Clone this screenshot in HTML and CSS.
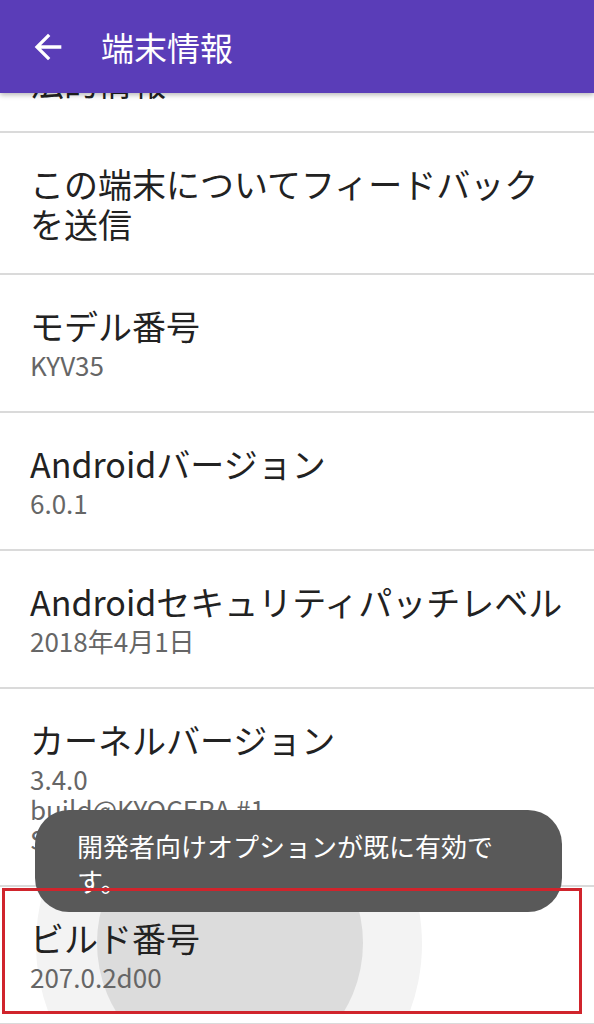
FILE: index.html
```html
<!DOCTYPE html>
<html lang="ja">
<head>
<meta charset="utf-8">
<title>端末情報</title>
<link rel="stylesheet" href="styles.css">
</head>
<body>
<div class="screen">
  <header class="appbar">
    <svg class="back" viewBox="0 0 24 24" aria-hidden="true"><path d="M20 11H7.83l5.59-5.59L12 4l-8 8 8 8 1.41-1.41L7.83 13H20v-2z"/></svg>
    <h1 class="appbar-title">端末情報</h1>
  </header>
  <div class="viewport">
    <ul class="list">
      <li class="pref"><div class="pref-title">法的情報</div></li>
      <li class="pref"><div class="pref-title">この端末についてフィードバックを送信</div></li>
      <li class="pref"><div class="pref-title">モデル番号</div><div class="pref-summary">KYV35</div></li>
      <li class="pref"><div class="pref-title">Androidバージョン</div><div class="pref-summary">6.0.1</div></li>
      <li class="pref"><div class="pref-title">Androidセキュリティパッチレベル</div><div class="pref-summary">2018年4月1日</div></li>
      <li class="pref"><div class="pref-title">カーネルバージョン</div><div class="pref-summary">3.4.0<br>build@KYOCERA #1<br>Sun Mar 18 00:00:00 JST 2018</div></li>
      <li class="pref pressed">
        <div class="ripple-clip"><span class="ripple-outer"></span><span class="ripple-inner"></span></div>
        <div class="pref-title">ビルド番号</div><div class="pref-summary">207.0.2d00</div>
      </li>
    </ul>
  </div>
  <div class="toast">開発者向けオプションが既に有効です。</div>
  <div class="highlight"></div>
</div>
</body>
</html>
```
FILE: styles.css
```css
* { box-sizing: border-box; }
html, body { margin: 0; padding: 0; background: #fff; }
body { font-family: "Noto Sans CJK JP", Roboto, sans-serif; }

.screen {
  position: relative;
  width: 594px;
  height: 1024px;
  overflow: hidden;
  display: flex;
  flex-direction: column;
  background: #fff;
}

.appbar {
  position: relative;
  z-index: 2;
  height: 93px;
  flex: none;
  background: #5a3db8;
  display: flex;
  align-items: center;
  padding-left: 28px;
  gap: 33px;
  box-shadow: 0 2px 5px rgba(0,0,0,0.28);
}
.back { width: 40px; height: 40px; fill: #fff; flex: none; }
.appbar-title {
  margin: 0;
  color: #fff;
  font-size: 33px;
  font-weight: 400;
  line-height: 40px;
}

.viewport { flex: 1; overflow: hidden; }
.list { list-style: none; margin: -62px 0 0; padding: 0; }

.pref {
  position: relative;
  overflow: hidden;
  padding: 31px 24px 29px 30px;
  border-bottom: 2px solid #dadada;
}
.pref-title {
  position: relative;
  z-index: 1;
  font-size: 34px;
  line-height: 40px;
  color: #222;
}
.pref-summary {
  position: relative;
  z-index: 1;
  margin: 4px 0 2px;
  font-size: 26px;
  line-height: 30px;
  color: #666;
  white-space: nowrap;
}

.ripple-clip {
  position: absolute;
  top: 0;
  left: 0;
  width: 580px;
  height: 125px;
  overflow: hidden;
}
.ripple-outer, .ripple-inner {
  position: absolute;
  border-radius: 50%;
}
.ripple-outer { left: 36px; top: -136px; width: 386px; height: 386px; background: #f3f3f3; }
.ripple-inner { left: 97px; top: -77px; width: 266px; height: 266px; background: #dcdcdc; }

.toast {
  position: absolute;
  z-index: 3;
  left: 35px;
  top: 810px;
  width: 527px;
  height: 102px;
  padding: 18px 60px 16px 42px;
  border-radius: 34px;
  background: #595959;
  color: #fff;
  font-size: 26px;
  line-height: 35px;
}

.highlight {
  position: absolute;
  z-index: 4;
  left: 2px;
  top: 888px;
  width: 580px;
  height: 126px;
  border: 3px solid #d0242c;
}
```
